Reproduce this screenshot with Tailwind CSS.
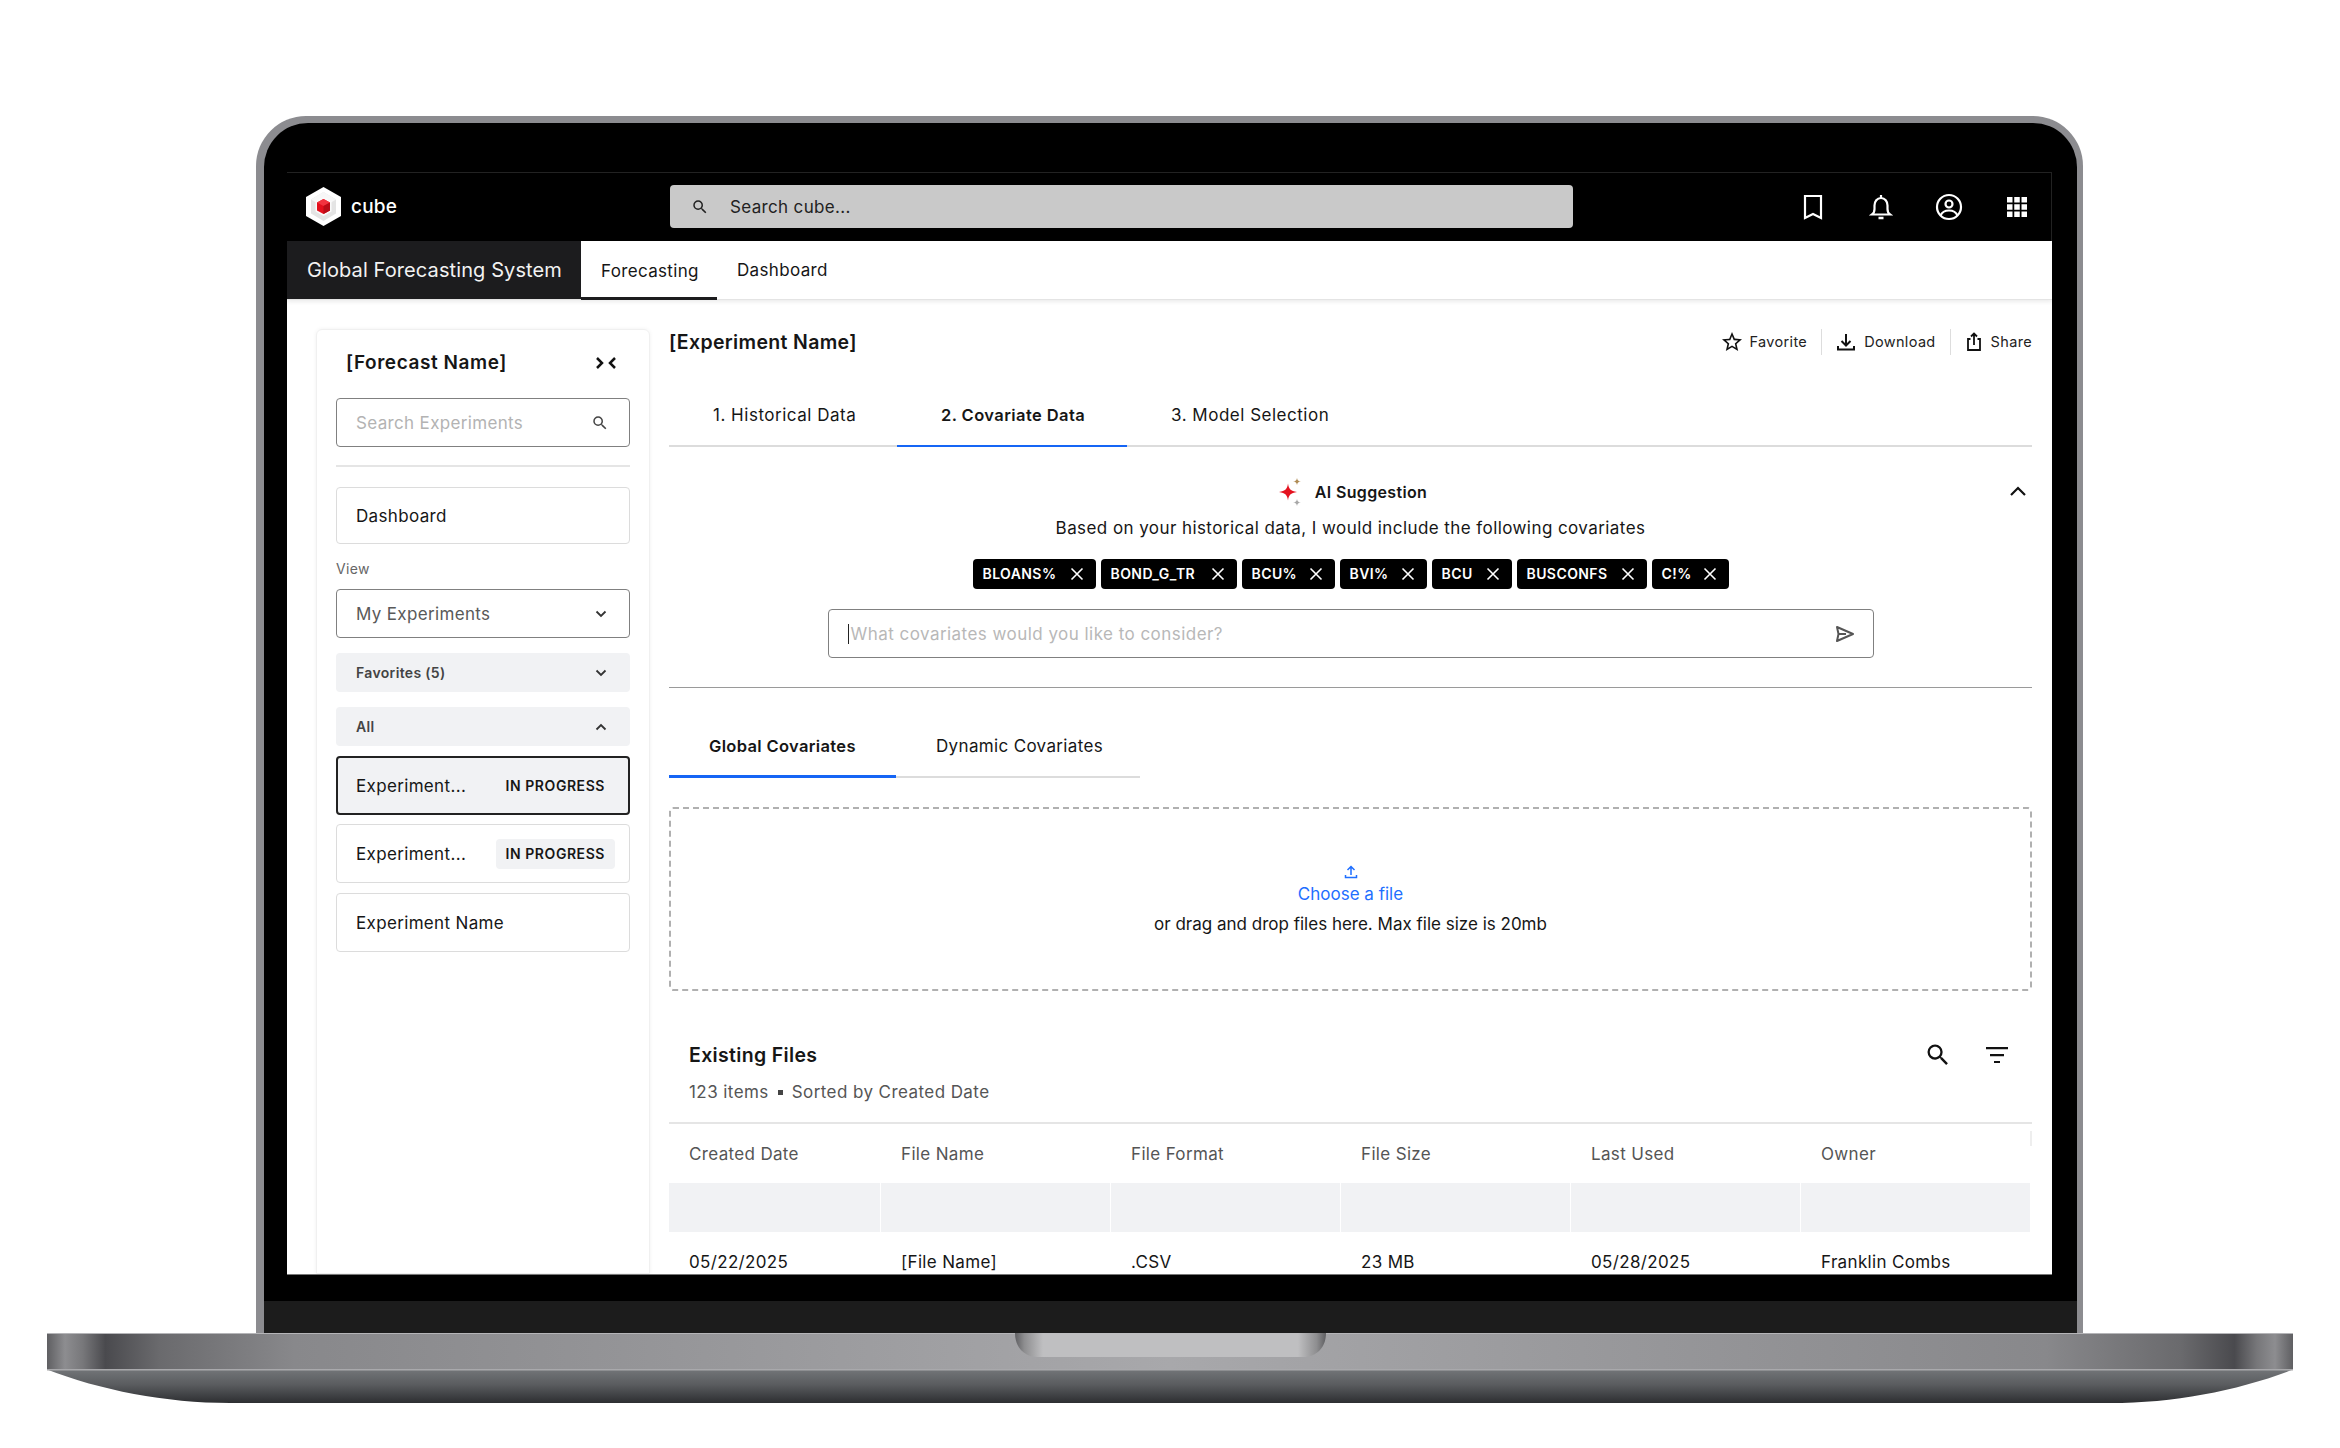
<!DOCTYPE html>
<html lang="en">
<head>
<meta charset="UTF-8" />
<title>Cube - Covariate Data</title>
<script src="https://cdn.jsdelivr.net/npm/@tailwindcss/browser@4"></script>
</head>
<body class="bg-white font-[Inter,sans-serif] text-[17px] leading-[24px] tracking-[0.02em] text-[#161616] overflow-hidden">
<div class="w-[2340px] h-[1448px] pt-[116px]">

  <!-- laptop lid -->
  <div class="ml-[256px] w-[1827px] h-[1217px] rounded-t-[50px] bg-[#8c8c90] pt-[7px] pl-[8px] pr-[6px]">
    <div class="h-full rounded-t-[44px] bg-black flex flex-col overflow-hidden">
      <div class="pt-[49px] pl-[23px]">

        <!-- screen -->
        <div class="w-[1765px] h-[1103px] bg-white flex flex-col overflow-hidden border-b border-[#777]">
          <header class="h-[69px] shrink-0 bg-black border-t border-r border-[#222] flex items-center pb-[1px]">
            <div class="w-[383px] pl-[19px] flex items-center gap-[10px] text-white text-[19px] font-medium tracking-[0.01em]">
              <svg width="35" height="39" viewBox="0 0 35 39">
                <polygon points="17.500,0 35,10 35,29 17.500,39 0,29 0,10" fill="#fff"/>
                <polygon points="17.500,5 30,12.500 30,26.500 17.500,34 5,26.500 5,12.500" fill="#e4e4e4"/>
                <polygon points="17.500,5 30,12.500 17.500,20 5,12.500" fill="#f7f7f7"/>
                <polygon points="17.500,10 25.500,14.500 25.500,24.500 17.500,29 9.500,24.500 9.500,14.500" fill="#fafafa"/>
                <polygon points="17.500,12 24,15.500 24,23.500 17.500,27 11,23.500 11,15.500" fill="#e30f1c"/>
                <polygon points="17.500,12 24,15.500 17.500,19 11,15.500" fill="#f2333f"/>
                <polygon points="17.500,19 24,15.500 24,23.500 17.500,27" fill="#b90c17"/>
              </svg>
              <span>cube</span>
            </div>
            <div class="w-[903px] h-[43px] rounded bg-[#c9c9c9] flex items-center pl-[21px] text-[#222]">
              <svg class="w-[18px] h-[18px] mr-[21px]" viewBox="0 0 24 24" fill="#222"><path d="M15.500 14h-.79l-.28-.27A6.470 6.470 0 0 0 16 9.500 6.500 6.500 0 1 0 9.500 16c1.610 0 3.090-.59 4.230-1.570l.27.28v.79l5 4.990L20.490 19l-4.990-5zm-6 0C7.010 14 5 11.990 5 9.500S7.010 5 9.500 5 14 7.010 14 9.500 11.990 14 9.500 14z"/></svg>
              <span>Search cube...</span>
            </div>
            <div class="ml-auto flex items-center gap-[40px] pr-[20px] text-white">
              <svg class="w-[28px] h-[28px]" viewBox="0 0 28 28" fill="none" stroke="#fff" stroke-width="2.200"><path d="M6 3h16v22l-8-4-8 4z"/></svg>
              <svg class="w-[28px] h-[28px]" viewBox="0 0 28 28" fill="none" stroke="#fff" stroke-width="2.200"><path d="M5 21.500c2-1.500 2.500-3 2.500-5.500v-3.500C7.500 8.500 10 5 14 5s6.500 3.500 6.500 7.500V16c0 2.500.5 4 2.500 5.500z"/><path d="M14 2v3" /><path d="M11.500 25h5" stroke-width="2.500"/></svg>
              <svg class="w-[28px] h-[28px]" viewBox="0 0 28 28" fill="none" stroke="#fff" stroke-width="2.200"><circle cx="14" cy="14" r="12"/><circle cx="14" cy="11" r="3.500"/><path d="M5.500 22.500C7 19 10.500 17.500 14 17.500s7 1.500 8.500 5"/></svg>
              <svg class="w-[28px] h-[28px]" viewBox="0 0 28 28" fill="#fff"><path d="M4 4h5.500v5.500H4zM11.250 4h5.500v5.500h-5.500zM18.500 4H24v5.500h-5.500zM4 11.250h5.500v5.500H4zM11.250 11.250h5.500v5.500h-5.500zM18.500 11.250H24v5.500h-5.500zM4 18.500h5.500V24H4zM11.250 18.500h5.500V24h-5.500zM18.500 18.500H24V24h-5.500z"/></svg>
            </div>
          </header>

          <nav class="h-[59px] shrink-0 flex border-b border-[#e4e4e4] shadow-[0_2px_4px_rgba(0,0,0,0.08)] z-10">
            <div class="w-[294px] bg-[#1c1c1e] text-[#f2f2f2] text-[20px] tracking-[0.005em] pl-[20px] flex items-center">Global Forecasting System</div>
            <div class="w-[136px] border-b-[3px] border-[#1c1c1e] pt-[3px] pl-[20px] flex items-center -mb-px">Forecasting</div>
            <div class="pl-[20px] flex items-center">Dashboard</div>
          </nav>

          <div class="flex-1 flex min-h-0">
            <!-- sidebar -->
            <aside class="ml-[29px] mt-[29px] w-[334px] shrink-0 rounded-t-md border border-[#f0f0f0] shadow-[0_0_4px_rgba(0,0,0,0.06)] px-[19px] pt-[18px]">
              <div class="h-[28px] mt-[1px] flex items-center justify-between pl-[10px] pr-[13px]">
                <span class="text-[19px] font-semibold tracking-[0.03em]">[Forecast Name]</span>
                <svg width="22" height="14" viewBox="0 0 22 14" fill="none" stroke="#111" stroke-width="2.500"><path d="M2 2l5 5-5 5M20 2l-5 5 5 5"/></svg>
              </div>
              <div class="mt-[21px] h-[49px] rounded border border-[#808080] flex items-center justify-between pl-[19px] pr-[20px] text-[#b3b3b3]">
                <span>Search Experiments</span>
                <svg class="w-[18px] h-[18px]" viewBox="0 0 24 24" fill="#444"><path d="M15.500 14h-.79l-.28-.27A6.470 6.470 0 0 0 16 9.500 6.500 6.500 0 1 0 9.500 16c1.610 0 3.090-.59 4.230-1.570l.27.28v.79l5 4.990L20.490 19l-4.990-5zm-6 0C7.010 14 5 11.990 5 9.500S7.010 5 9.500 5 14 7.010 14 9.500 11.990 14 9.500 14z"/></svg>
              </div>
              <div class="mt-[18px] h-[2px] bg-[#e5e5e5]"></div>
              <div class="mt-[20px] h-[57px] rounded border border-[#dcdcdc] flex items-center pl-[19px]">Dashboard</div>
              <div class="mt-[15px] h-[20px] flex items-center text-[14px] text-[#666]">View</div>
              <div class="mt-[10px] h-[49px] rounded border border-[#808080] flex items-center justify-between pl-[19px] pr-[22px] text-[#595959]">
                <span>My Experiments</span>
                <svg width="12" height="8" viewBox="0 0 12 8" fill="none" stroke="#333" stroke-width="1.800"><path d="M1.500 1.500L6 6l4.500-4.500"/></svg>
              </div>
              <div class="mt-[15px] h-[39px] rounded bg-[#f1f2f4] flex items-center justify-between pl-[20px] pr-[23px] text-[14px] font-semibold text-[#444]">
                <span>Favorites (5)</span>
                <svg width="12" height="8" viewBox="0 0 12 8" fill="none" stroke="#333" stroke-width="1.800"><path d="M1.500 1.500L6 6l4.500-4.500"/></svg>
              </div>
              <div class="mt-[15px] h-[39px] rounded bg-[#f1f2f4] flex items-center justify-between pl-[20px] pr-[23px] text-[14px] font-semibold text-[#444]">
                <span>All</span>
                <svg width="12" height="8" viewBox="0 0 12 8" fill="none" stroke="#333" stroke-width="1.800"><path d="M1.500 6.500L6 2l4.500 4.500"/></svg>
              </div>
              <div class="mt-[10px] h-[59px] rounded border-2 border-[#222] bg-[#f1f2f4] flex items-center justify-between pl-[18px] pr-[23px]">
                <span>Experiment...</span>
                <span class="text-[14px] font-semibold tracking-[0.04em]">IN PROGRESS</span>
              </div>
              <div class="mt-[9px] h-[59px] rounded border border-[#dcdcdc] flex items-center justify-between pl-[19px] pr-[14px]">
                <span>Experiment...</span>
                <span class="h-[30px] px-[10px] rounded bg-[#f1f2f4] flex items-center text-[14px] font-semibold tracking-[0.04em]">IN PROGRESS</span>
              </div>
              <div class="mt-[10px] h-[59px] rounded border border-[#dcdcdc] flex items-center pl-[19px]">Experiment Name</div>
            </aside>

            <!-- main -->
            <main class="ml-[19px] w-[1363px] shrink-0 overflow-hidden">
              <div class="mt-[29px] h-[26px] flex items-center justify-between">
                <span class="text-[19.500px] font-semibold">[Experiment Name]</span>
                <div class="flex items-center text-[14.500px] text-[#222]">
                  <svg class="w-[24px] h-[24px] mr-[6px]" viewBox="0 0 24 24" fill="#111"><path d="M22 9.240l-7.190-.62L12 2 9.190 8.630 2 9.240l5.460 4.730L5.820 21 12 17.270 18.180 21l-1.630-7.030L22 9.240zM12 15.400l-3.760 2.270 1-4.280-3.320-2.880 4.380-.38L12 6.100l1.710 4.040 4.380.38-3.320 2.880 1 4.280L12 15.400z"/></svg>
                  <span>Favorite</span>
                  <span class="mx-[14px] w-px h-[26px] bg-[#ddd]"></span>
                  <svg class="w-[20px] h-[20px] mr-[8px]" viewBox="0 0 20 20" fill="none" stroke="#111" stroke-width="2"><path d="M10 2v11M5.500 9l4.500 4.500L14.500 9M2 14v3.500h16V14"/></svg>
                  <span>Download</span>
                  <span class="mx-[14px] w-px h-[26px] bg-[#ddd]"></span>
                  <svg class="w-[18px] h-[20px] mr-[8px]" viewBox="0 0 18 20" fill="none" stroke="#111" stroke-width="1.800"><path d="M5.500 7H3v11h12V7h-2.500M9 13V2M6 4.500L9 1.500l3 3"/></svg>
                  <span>Share</span>
                </div>
              </div>

              <div class="mt-[30px] h-[62px] flex border-b-2 border-[#dcdcdc] tracking-[0.03em]">
                <div class="w-[228px] pl-[44px] flex items-center">1. Historical Data</div>
                <div class="w-[230px] h-[62px] pl-[44px] flex items-center text-[16.500px] font-semibold tracking-[0.025em] border-b-2 border-[#1565f5]">2. Covariate Data</div>
                <div class="pl-[44px] flex items-center">3. Model Selection</div>
              </div>

              <section class="relative">
                <div class="mt-[33px] h-[24px] pl-[5px] flex items-center justify-center gap-[14px] text-[16px] font-semibold">
                  <svg width="22" height="28" viewBox="0 0 22 28">
                    <path d="M9 5.500C9.800 11 11.500 13 18 14 11.500 15 9.800 17 9 22.500 8.200 17 6.500 15 0 14 6.500 13 8.200 11 9 5.500z" fill="#e4121f"/>
                    <path d="M18 0C18.400 2.300 19.300 3.200 22 3.500 19.300 3.800 18.400 4.700 18 7 17.600 4.700 16.700 3.800 14 3.500 16.700 3.200 17.600 2.300 18 0z" fill="#b08d57"/>
                    <path d="M18 21C18.400 23.300 19.300 24.200 22 24.500 19.300 24.800 18.400 25.700 18 28 17.600 25.700 16.700 24.800 14 24.500 16.700 24.200 17.600 23.300 18 21z" fill="#a8a8a8"/>
                  </svg>
                  <span>AI Suggestion</span>
                </div>
                <svg class="absolute right-[5px] top-[5px]" width="18" height="12" viewBox="0 0 18 12" fill="none" stroke="#111" stroke-width="2.200"><path d="M2 10l7-7 7 7"/></svg>
                <div class="mt-[12px] h-[24px] flex items-center justify-center tracking-[0.025em]">Based on your historical data, I would include the following covariates</div>
                <div class="mt-[19px] flex justify-center gap-[5px] text-white text-[14px] font-semibold tracking-[0.03em]">
                  <span class="w-[123px] h-[30px] rounded bg-black flex items-center justify-between pl-[10px] pr-[12px]">BLOANS% <svg width="14" height="14" viewBox="0 0 14 14" stroke="#fff" stroke-width="1.600"><path d="M1.500 1.500l11 11M12.500 1.500l-11 11"/></svg></span>
                  <span class="w-[136px] h-[30px] rounded bg-black flex items-center justify-between pl-[10px] pr-[12px]">BOND_G_TR <svg width="14" height="14" viewBox="0 0 14 14" stroke="#fff" stroke-width="1.600"><path d="M1.500 1.500l11 11M12.500 1.500l-11 11"/></svg></span>
                  <span class="w-[93px] h-[30px] rounded bg-black flex items-center justify-between pl-[10px] pr-[12px]">BCU% <svg width="14" height="14" viewBox="0 0 14 14" stroke="#fff" stroke-width="1.600"><path d="M1.500 1.500l11 11M12.500 1.500l-11 11"/></svg></span>
                  <span class="w-[87px] h-[30px] rounded bg-black flex items-center justify-between pl-[10px] pr-[12px]">BVI% <svg width="14" height="14" viewBox="0 0 14 14" stroke="#fff" stroke-width="1.600"><path d="M1.500 1.500l11 11M12.500 1.500l-11 11"/></svg></span>
                  <span class="w-[80px] h-[30px] rounded bg-black flex items-center justify-between pl-[10px] pr-[12px]">BCU <svg width="14" height="14" viewBox="0 0 14 14" stroke="#fff" stroke-width="1.600"><path d="M1.500 1.500l11 11M12.500 1.500l-11 11"/></svg></span>
                  <span class="w-[130px] h-[30px] rounded bg-black flex items-center justify-between pl-[10px] pr-[12px]">BUSCONFS <svg width="14" height="14" viewBox="0 0 14 14" stroke="#fff" stroke-width="1.600"><path d="M1.500 1.500l11 11M12.500 1.500l-11 11"/></svg></span>
                  <span class="w-[77px] h-[30px] rounded bg-black flex items-center justify-between pl-[10px] pr-[12px]">C!% <svg width="14" height="14" viewBox="0 0 14 14" stroke="#fff" stroke-width="1.600"><path d="M1.500 1.500l11 11M12.500 1.500l-11 11"/></svg></span>
                </div>
                <div class="mt-[20px] mx-auto w-[1046px] h-[49px] rounded border border-[#808080] flex items-center justify-between pl-[19px] pr-[18px] text-[#b8b8b8] tracking-[0.027em]">
                  <span class="flex items-center"><span class="w-px h-[20px] bg-[#222] mr-[2px]"></span>What covariates would you like to consider?</span>
                  <svg width="20" height="18" viewBox="0 0 20 18" fill="none" stroke="#555" stroke-width="2" stroke-linejoin="round"><path d="M2 2l16 7-16 7 1.500-7zM3.500 9H11"/></svg>
                </div>
              </section>

              <div class="mt-[29px] h-px bg-[#9a9a9a]"></div>

              <div class="mt-[28px] w-[471px] h-[62px] flex border-b-2 border-[#dcdcdc]">
                <div class="w-[227px] h-[62px] pl-[40px] flex items-center text-[16.500px] font-semibold border-b-[3px] border-[#1565f5]">Global Covariates</div>
                <div class="pl-[40px] flex items-center">Dynamic Covariates</div>
              </div>

              <div class="mt-[29px] h-[184px] rounded border-2 border-dashed border-[#b0b0b0] flex flex-col items-center pt-[56px] tracking-normal">
                <svg width="14" height="14" viewBox="0 0 14 14" fill="none" stroke="#1f6fff" stroke-width="1.500"><path d="M7 10V1.500M3.500 5L7 1.500 10.500 5M1.500 10v2.500h11V10"/></svg>
                <span class="mt-[3px] text-[#1f6fff]">Choose a file</span>
                <span class="mt-[6px]">or drag and drop files here. Max file size is 20mb</span>
              </div>

              <div class="mt-[50px] h-[28px] flex items-center justify-between pl-[20px] pr-[23px]">
                <span class="text-[19.500px] font-semibold">Existing Files</span>
                <div class="flex items-center gap-[33px]">
                  <svg class="w-[28px] h-[28px]" viewBox="0 0 24 24" fill="#111"><path d="M15.500 14h-.79l-.28-.27A6.470 6.470 0 0 0 16 9.500 6.500 6.500 0 1 0 9.500 16c1.610 0 3.090-.59 4.230-1.570l.27.28v.79l5 4.990L20.490 19l-4.990-5zm-6 0C7.010 14 5 11.990 5 9.500S7.010 5 9.500 5 14 7.010 14 9.500 11.990 14 9.500 14z"/></svg>
                  <svg width="24" height="16" viewBox="0 0 24 16" fill="#111"><path d="M1 0h22v2.200H1zM5 7h14v2.200H5zM9 14h6v2.200H9z"/></svg>
                </div>
              </div>
              <div class="mt-[11px] h-[24px] pl-[20px] flex items-center text-[#555] tracking-[0.025em]">123 items<span class="mx-[9px] w-[5px] h-[5px] bg-[#444]"></span>Sorted by Created Date</div>

              <div class="mt-[18px] border-t-2 border-[#e5e5e5]">
                <div class="relative grid grid-cols-[211px_229px_229px_229px_229px_229px] gap-x-px h-[59px] items-center text-[#555]">
                  <span class="pl-[20px]">Created Date</span>
                  <span class="pl-[20px]">File Name</span>
                  <span class="pl-[20px]">File Format</span>
                  <span class="pl-[20px]">File Size</span>
                  <span class="pl-[20px]">Last Used</span>
                  <span class="pl-[20px]">Owner</span>
                  <span class="absolute right-0 top-[7px] w-[2px] h-[15px] bg-[#eeeeee]"></span>
                </div>
                <div class="grid grid-cols-[211px_229px_229px_229px_229px_229px] gap-x-px h-[49px]">
                  <div class="bg-[#f1f2f4]"></div>
                  <div class="bg-[#f1f2f4]"></div>
                  <div class="bg-[#f1f2f4]"></div>
                  <div class="bg-[#f1f2f4]"></div>
                  <div class="bg-[#f1f2f4]"></div>
                  <div class="bg-[#f1f2f4]"></div>
                </div>
                <div class="grid grid-cols-[211px_229px_229px_229px_229px_229px] gap-x-px h-[60px] items-center">
                  <span class="pl-[20px]">05/22/2025</span>
                  <span class="pl-[20px]">[File Name]</span>
                  <span class="pl-[20px]">.CSV</span>
                  <span class="pl-[20px]">23 MB</span>
                  <span class="pl-[20px]">05/28/2025</span>
                  <span class="pl-[20px]">Franklin Combs</span>
                </div>
              </div>
            </main>
          </div>
        </div>
      </div>
      <div class="mt-[26px] h-[32px] bg-[#1c1c1c]"></div>
    </div>
  </div>

  <!-- laptop base -->
  <svg class="block" width="2340" height="72" viewBox="0 1333 2340 72">
    <defs>
      <linearGradient id="band" x1="0" x2="1" y1="0" y2="0">
        <stop offset="0" stop-color="#5f5f62"/>
        <stop offset="0.008" stop-color="#8d8d90"/>
        <stop offset="0.016" stop-color="#77777a"/>
        <stop offset="0.026" stop-color="#4a4a4e"/>
        <stop offset="0.05" stop-color="#6a6a6d"/>
        <stop offset="0.11" stop-color="#88888b"/>
        <stop offset="0.5" stop-color="#a8a8ab"/>
        <stop offset="0.89" stop-color="#88888b"/>
        <stop offset="0.95" stop-color="#6a6a6d"/>
        <stop offset="0.974" stop-color="#4a4a4e"/>
        <stop offset="0.984" stop-color="#77777a"/>
        <stop offset="0.992" stop-color="#8d8d90"/>
        <stop offset="1" stop-color="#5f5f62"/>
      </linearGradient>
      <linearGradient id="lower" x1="0" x2="0" y1="0" y2="1">
        <stop offset="0" stop-color="#727578"/>
        <stop offset="0.45" stop-color="#5a5c5f"/>
        <stop offset="1" stop-color="#2d2e31"/>
      </linearGradient>
      <linearGradient id="notch" x1="0" x2="1" y1="0" y2="0">
        <stop offset="0" stop-color="#5f5f62"/>
        <stop offset="0.03" stop-color="#8e8e90"/>
        <stop offset="0.09" stop-color="#bfbfc1"/>
        <stop offset="0.91" stop-color="#bfbfc1"/>
        <stop offset="0.97" stop-color="#8e8e90"/>
        <stop offset="1" stop-color="#5f5f62"/>
      </linearGradient>
    </defs>
    <path d="M47 1369.500C100 1390 165 1403 230 1403H2110C2175 1403 2240 1390 2293 1369.500z" fill="url(#lower)"/>
    <rect x="47" y="1333" width="2246" height="36" fill="url(#band)"/>
    <rect x="47" y="1369" width="2246" height="1.500" fill="#a9a9ac"/>
    <rect x="47" y="1333" width="2246" height="1" fill="#b5b5b8"/>
    <path d="M1015 1333H1326C1326 1347 1317 1357 1303 1357H1038C1024 1357 1015 1347 1015 1333z" fill="url(#notch)"/>
  </svg>
</div>
</body>
</html>
